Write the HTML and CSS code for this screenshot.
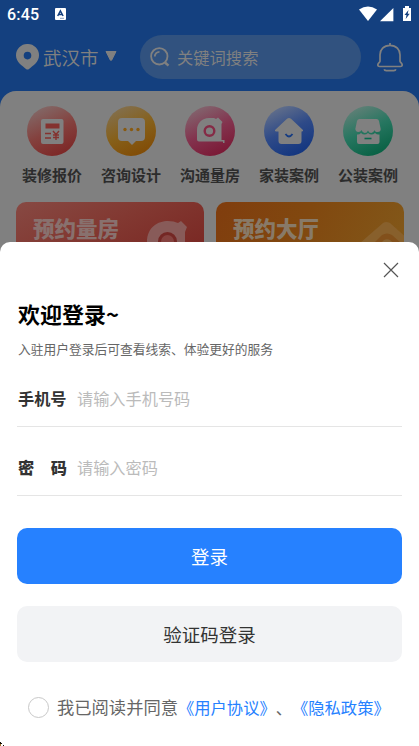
FILE: index.html
```html
<!DOCTYPE html>
<html lang="zh-CN">
<head>
<meta charset="utf-8">
<meta name="viewport" content="width=device-width, initial-scale=1">
<title>登录</title>
<link rel="stylesheet" href="styles.css">
</head>
<body>
<div class="screen">
  <div class="status">
    <span class="time">6:45</span>
    <svg class="status-app" width="11" height="12" viewBox="0 0 11 12"><rect width="11" height="12" rx="1" fill="#fff"/><path d="M2.7 8 5.4 2.8 8.1 8M3.8 6.4h3.2" fill="none" stroke="#14407f" stroke-width="1.5"/><path d="M5.5 10.3h1M7.5 10.3h1" stroke="#14407f"/></svg>
    <svg class="status-icons" width="53" height="16" viewBox="0 0 53 16"><path d="M0 3.6Q9-2.4 18 3.6L9 15Z" fill="#fff"/><path d="M21 15.3H34.4V2Z" fill="#fff"/><path d="M44 2h2V0h4v2h2v13h-8Z" fill="#fff"/><path d="m49.5 4-4 5h2l-.8 4 4-5.2h-2Z" fill="#14407f"/></svg>
  </div>
  <div class="topbar">
    <svg width="23" height="26" viewBox="0 0 23 26"><path fill-rule="evenodd" d="M11.5 0A11.3 11.3 0 0 0 0 11.5C0 18 6 21.5 10 25q1.5 1.2 3 0C17 21.5 23 18 23 11.5A11.3 11.3 0 0 0 11.5 0Zm0 7.8a3.8 3.8 0 1 1 0 7.6 3.8 3.8 0 0 1 0-7.6Z" fill="#808080"/></svg>
    <span class="city">武汉市</span>
    <svg class="caret" width="12" height="10" viewBox="0 0 12 10"><path d="M1 .5h10L6.6 9.2H5.4Z" fill="#808080" stroke="#808080" stroke-linejoin="round"/></svg>
    <div class="search">
      <svg width="20" height="20" viewBox="0 0 20 20" fill="none" stroke="#808080" stroke-width="1.8"><circle cx="9.3" cy="9.3" r="8.2"/><path d="m15 15.5 3.5 3.2" stroke-width="2.4"/><path d="M4.8 9.5a4.6 4.6 0 0 1 4.7-4.6"/></svg>
      <span>关键词搜索</span>
    </div>
    <svg class="bell" width="26" height="29" viewBox="0 0 26 29" fill="none" stroke="#808080" stroke-width="1.7"><path d="M13 0v3M13 2.3c-6.300 0-10 4.200-10 9.500v6.400c0 1.400-2.200 1.700-2.200 3.800 0 1 .7 1.500 1.700 1.500h21c1 0 1.700-.5 1.700-1.500 0-2.100-2.200-2.400-2.200-3.800v-6.400c0-5.300-3.700-9.500-10-9.500Z"/><path d="M7.2 26.200q.3 1.400 2 1.400h7.600q1.700 0 2-1.400"/></svg>
  </div>
  <div class="panel">
    <div class="services">
      <div class="service"><div class="disc red">
        <svg width="50" height="50" viewBox="0 0 50 50"><rect class="glyph" x="14" y="13" width="22.5" height="25" rx="2"/><path d="M18.5 17.5h14v5h-14Z" fill="#84322f"/><path d="M18 27.5h6M18 32h6M26 25l3 3.500 3-3.500M26 29h6M26 31.500h6M29 28v6" fill="none" stroke="#84322f" stroke-width="1.400"/></svg></div><span>装修报价</span></div>
      <div class="service"><div class="disc amber">
        <svg width="50" height="50" viewBox="0 0 50 50"><path class="glyph" d="M16 12h19q4 0 4 4v15q0 4-4 4h-5l-4 4-4-4h-6q-4 0-4-4V16q0-4 4-4Z"/><g fill="#895a10"><circle cx="19" cy="23.500" r="1.700"/><circle cx="25.500" cy="23.500" r="1.700"/><circle cx="32" cy="23.500" r="1.700"/></g></svg></div><span>咨询设计</span></div>
      <div class="service"><div class="disc pink">
        <svg width="50" height="50" viewBox="0 0 50 50"><path class="glyph" d="M12 35V24c0-7 5-12 12-12h5l2 1 2-1.500 4.500 4.500-1 2v16h3v3h-1.500v-1.500H14q-2 0-2-2Z"/><circle cx="24.500" cy="25" r="4.800" fill="none" stroke="#852b46" stroke-width="2.400"/></svg></div><span>沟通量房</span></div>
      <div class="service"><div class="disc blue">
        <svg width="50" height="50" viewBox="0 0 50 50"><path class="glyph" d="M11 24 23 12.800q2-1.600 4 0L39 24q.5 1-1 1.500H37.500V35q0 3-3 3h-17q-3 0-3-3v-9.500H12q-1.500-.5-1-1.500Z"/><path d="M21.500 28q3.500 5 7 0" fill="none" stroke="#163c82" stroke-width="1.800"/></svg></div><span>家装案例</span></div>
      <div class="service"><div class="disc green">
        <svg width="50" height="50" viewBox="0 0 50 50"><path class="glyph" d="M14 28.500q2 .5 4-1.500 3.500 3 7 0 3.500 3 7 0 2 2 4.500 1.500V36q0 2-2 2H16q-2 0-2-2Z"/><path class="glyph" d="M16.500 13h17q2 0 2.500 2l1.700 8q0 3-3 3t-3.200-2q-1 3-3.300 3T25 24.500q-1 2.500-3.200 2.500t-3.300-3q-.7 2-3.200 2t-3-3L14 15q.5-2 2.500-2Z"/><path d="M21.500 32.500h7" stroke="#08694e" stroke-width="1.600"/></svg></div><span>公装案例</span></div>
    </div>
    <div class="cards">
      <div class="card coral"><span>预约量房</span><svg width="188" height="60" viewBox="0 0 188 60"><path d="M131 60V40C131 25 142 19 152 19q6 0 10 2l3-2 6 6-2 5v30Z" fill="#885b59"/><circle cx="151.500" cy="39.500" r="8" fill="#85423f" stroke="#742724" stroke-width="3"/></svg></div>
      <div class="card orange"><span>预约大厅</span><svg width="188" height="60" viewBox="0 0 188 60"><path d="m136 48 31-27q3-2 7 0l20 18v35h-58Z" fill="#88602c"/><path d="m151 48 15-15q5-3 10 0l18 16v15h-50Z" fill="#82501b"/><path d="m160 46 8-8q3-1.500 6 0l10 9Z" fill="#886332"/></svg></div>
    </div>
  </div>
  <div class="sheet">
    <svg class="close" width="16" height="16" viewBox="0 0 16 16"><path d="m1 1 14 14M15 1 1 15" stroke="#555" stroke-width="1.200"/></svg>
    <h1>欢迎登录~</h1>
    <p class="intro">入驻用户登录后可查看线索、体验更好的服务</p>
    <div class="field"><span class="label">手机号</span><span class="hint">请输入手机号码</span></div>
    <div class="field second"><span class="label split"><b>密</b><b>码</b></span><span class="hint">请输入密码</span></div>
    <div class="button primary">登录</div>
    <div class="button secondary">验证码登录</div>
    <div class="agree"><i class="radio"></i><span class="agree-text">我已阅读并同意</span><span class="terms"><a>《用户协议》</a>、<a>《隐私政策》</a></span></div>
    <svg class="corner" width="4" height="4" viewBox="0 0 4 4"><path d="M0 0h1v1h1v1H1v1H0ZM3 3h1v1H3Z" fill="#171008"/><path d="M0 2h1v2H0Z" fill="#a77928"/></svg>
  </div>
</div>
</body>
</html>
```
FILE: styles.css
```css
* { box-sizing: border-box; }
body { margin: 0; font-family: "Noto Sans CJK SC", sans-serif; text-spacing-trim: space-all; font-kerning: none; }
svg { display: block; flex: none; }
.screen { width: 419px; height: 746px; overflow: hidden; background: #14407f; position: relative; display: flex; flex-direction: column; }
.status { height: 28px; flex: none; display: flex; padding: 6px 7px 0 7px; color: #fff; }
.time { font: 500 16px/18px Roboto, sans-serif; width: 48px; letter-spacing: .2px; }
.status-app { margin-top: 2px; }
.status-icons { margin-left: auto; }
.topbar { height: 63px; flex: none; display: flex; align-items: center; padding: 0 16px 5px 16px; color: #808080; }
.city { font-size: 18.5px; line-height: 24px; margin-left: 4px; width: 56px; white-space: nowrap; }
.caret { margin: 0 0 2px 6px; }
.search { width: 221px; height: 44px; margin-left: 23px; border-radius: 22px; background: #31527f; display: flex; align-items: center; gap: 7px; padding-left: 10px; font-size: 16.300px; line-height: 24px; }
.bell { margin-left: auto; }
.panel { height: 170px; flex: none; background: #808080; border-radius: 16px 16px 0 0; padding-top: 15px; }
.services { display: flex; padding-left: 12.500px; height: 96px; }
.service { width: 79px; display: flex; flex-direction: column; align-items: center; font-size: 15px; line-height: 22px; font-weight: 700; color: #2c2c2c; }
.service span { margin-top: 8px; white-space: nowrap; }
.disc { width: 50px; height: 50px; border-radius: 50%; }
.glyph { fill: #808080; }
.red { background: linear-gradient(155deg, #826d6c 5%, #84413e 50%, #7b2020); }
.amber { background: linear-gradient(155deg, #827154 5%, #86601a 50%, #804600); }
.pink { background: linear-gradient(155deg, #826b72 5%, #83334e 50%, #78112e); }
.blue { background: linear-gradient(155deg, #69748b 5%, #2e4a88 48%, #0b307d); }
.green { background: linear-gradient(155deg, #68817a 5%, #267660 48%, #005b3c); }
.cards { display: flex; gap: 12px; padding-left: 16px; }
.card { width: 188px; height: 60px; border-radius: 10px; overflow: hidden; display: grid; }
.card > * { grid-area: 1 / 1; }
.card span { z-index: 1; padding: 14px 0 0 17px; font-size: 21.500px; line-height: 24px; font-weight: 900; }
.coral { background: linear-gradient(155deg, #874943, #823831 45%, #782420); }
.orange { background: linear-gradient(115deg, #803d0e, #81480f 45%, #82591a); }
.orange span { color: #887a68; }
.coral span { color: #88716e; }
.sheet { height: 504px; margin-top: -19px; flex: none; background: #fff; border-radius: 10px 10px 0 0; position: relative; padding: 20px 17px 0 18px; display: flex; flex-direction: column; }
.close { align-self: flex-end; margin-right: 3px; }
h1 { margin: 19px 0 0; font-size: 22px; line-height: 32px; font-weight: 700; color: #000; }
.intro { margin: 10px 0 0; font-size: 12.750px; line-height: 20px; color: #666; }
.field { height: 56px; margin-top: 12px; margin-left: -1px; padding: 0 0 2px 1px; border-bottom: 1px solid #e5e5e5; display: flex; align-items: center; font-size: 16.200px; line-height: 24px; }
.field.second { margin-top: 13px; }
.label { width: 49px; font-weight: 700; color: #333; white-space: nowrap; }
.split { display: flex; justify-content: space-between; }
.hint { margin-left: 10px; color: #bbb; }
.button { height: 56px; margin-left: -1px; border-radius: 10px; display: flex; align-items: center; justify-content: center; font-size: 18.500px; flex: none; }
.primary { margin-top: 32px; background: #2681ff; color: #fff; }
.secondary { margin-top: 22px; background: #f2f3f5; color: #333; }
.agree { display: flex; align-items: center; height: 24px; margin-top: 33px; padding-left: 10px; line-height: 24px; color: #666; white-space: nowrap; }
.radio { width: 21px; height: 21px; border: 1px solid #c8c8c8; border-radius: 50%; flex: none; }
.agree-text { font-size: 17.300px; margin-left: 8px; width: 121px; }
.terms { font-size: 16.300px; }
.terms a { color: #2681ff; }
.corner { position: absolute; left: 0; bottom: 0; }
```
